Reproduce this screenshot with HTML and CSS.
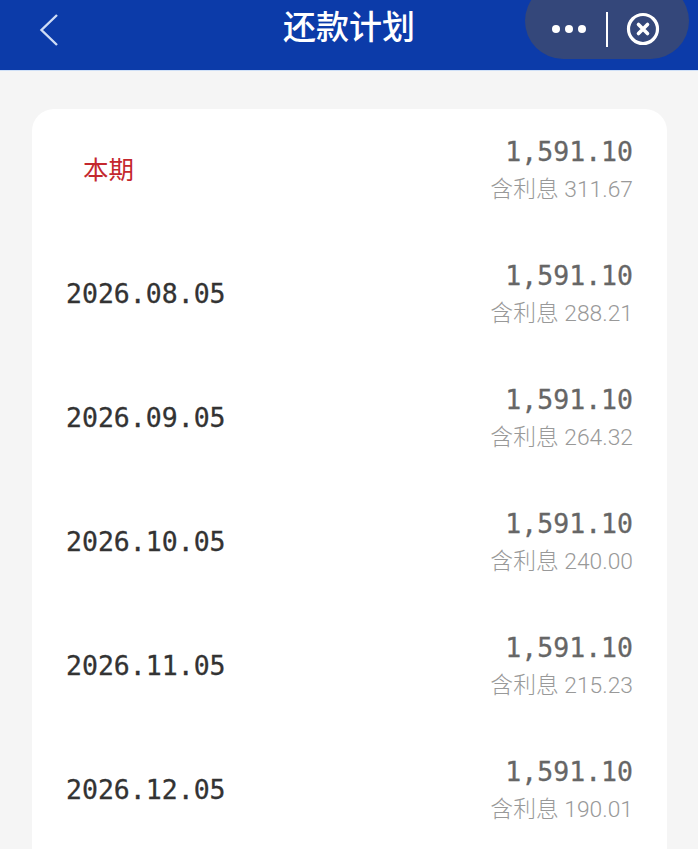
FILE: index.html
```html
<!DOCTYPE html>
<html lang="zh-CN">
  <head>
    <meta charset="UTF-8" />
    <title>还款计划</title>
    <link rel="stylesheet" href="styles.css">
  </head>
  <body>
    <header class="topbar">
      <svg class="back" width="24" height="36" viewBox="0 0 24 36">
        <path d="M19 3 L3.5 18 L19 33" fill="none" stroke="#cfdcf5" stroke-width="2.4" />
      </svg>
      <h1 class="title">还款计划</h1>
      <div class="capsule">
        <span class="dots"><i></i><i></i><i></i></span>
        <span class="divider"></span>
        <svg class="close" width="34" height="34" viewBox="0 0 34 34">
          <circle cx="17" cy="17" r="14.5" fill="none" stroke="#fff" stroke-width="3.2" />
          <path d="M12.5 12.5 L21.5 21.5 M21.5 12.5 L12.5 21.5" stroke="#fff" stroke-width="3.6" stroke-linecap="round" />
        </svg>
      </div>
    </header>

    <main class="content">
      <section class="card">
        <div class="row">
          <span class="current">本期</span>
          <div class="amounts">
            <span class="amount">1,591.10</span>
            <span class="interest">含利息 311.67</span>
          </div>
        </div>
        <div class="row">
          <span class="date">2026.08.05</span>
          <div class="amounts">
            <span class="amount">1,591.10</span>
            <span class="interest">含利息 288.21</span>
          </div>
        </div>
        <div class="row">
          <span class="date">2026.09.05</span>
          <div class="amounts">
            <span class="amount">1,591.10</span>
            <span class="interest">含利息 264.32</span>
          </div>
        </div>
        <div class="row">
          <span class="date">2026.10.05</span>
          <div class="amounts">
            <span class="amount">1,591.10</span>
            <span class="interest">含利息 240.00</span>
          </div>
        </div>
        <div class="row">
          <span class="date">2026.11.05</span>
          <div class="amounts">
            <span class="amount">1,591.10</span>
            <span class="interest">含利息 215.23</span>
          </div>
        </div>
        <div class="row">
          <span class="date">2026.12.05</span>
          <div class="amounts">
            <span class="amount">1,591.10</span>
            <span class="interest">含利息 190.01</span>
          </div>
        </div>
      </section>
    </main>
  </body>
</html>
```

FILE: styles.css
```css
html,
body {
  height: 100%;
}

body {
  margin: 0;
  overflow: hidden;
  background-color: #f5f5f5;
  font-family: Roboto, "Noto Sans CJK SC", sans-serif;
}

.topbar {
  height: 71px;
  box-sizing: border-box;
  padding: 0 9px 0 38px;
  background-color: #0c3ba9;
  border-bottom: 1px solid #cfe0f7;
  display: flex;
  align-items: center;
  justify-content: space-between;
  position: relative;
}

.back {
  margin-bottom: 10px;
}

.title {
  position: absolute;
  left: 0;
  right: 0;
  top: 6px;
  margin: 0;
  text-align: center;
  font-size: 33px;
  line-height: 44px;
  font-weight: 500;
  color: #fff;
}

.capsule {
  width: 164px;
  height: 76px;
  margin-top: -28px;
  padding-top: 16px;
  box-sizing: border-box;
  border-radius: 38px;
  background-color: #34477a;
  display: flex;
  align-items: center;
  padding-left: 27px;
}

.dots {
  display: flex;
  gap: 5px;
}

.dots i {
  width: 8px;
  height: 8px;
  border-radius: 50%;
  background-color: #fff;
}

.divider {
  width: 1.5px;
  height: 35px;
  margin: 0 18.5px 0 20px;
  background-color: #fff;
}

.content {
  padding: 38px 31px 0 32px;
}

.card {
  background-color: #fff;
  border-radius: 22px;
  padding-bottom: 30px;
}

.row {
  height: 124px;
  padding: 0 34px;
  display: flex;
  align-items: center;
  justify-content: space-between;
}

.current {
  margin-left: 17px;
  margin-bottom: 8px;
  font-size: 25.5px;
  color: #c4282e;
}

.date,
.amount {
  font-family: "DejaVu Sans Mono", monospace;
  font-size: 26.5px;
  -webkit-text-stroke: 0.3px currentColor;
}

.date {
  margin-bottom: 4px;
  color: #333;
}

.amounts {
  display: flex;
  flex-direction: column;
  align-items: flex-end;
  gap: 7px;
  margin-bottom: 2px;
}

.amount {
  line-height: 33px;
  color: #666;
}

.interest {
  font-size: 22.8px;
  line-height: 30px;
  font-weight: 300;
  color: #999;
}
```
